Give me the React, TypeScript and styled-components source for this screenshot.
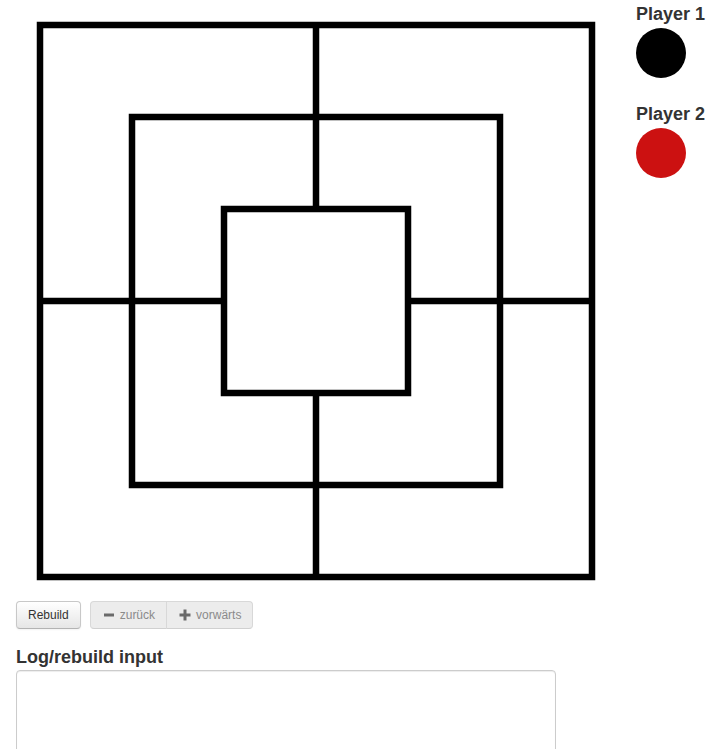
import React from "react";
import styled, { createGlobalStyle } from "styled-components";

const GlobalStyle = createGlobalStyle`
  html, body {
    margin: 0;
    padding: 0;
    background: #fff;
  }
  body {
    font-family: "Liberation Sans", Arial, Helvetica, sans-serif;
    font-size: 14px;
    line-height: 20px;
    color: #333;
  }
`;

const Page = styled.div`
  padding-left: 16px;
`;

const TopRow = styled.div`
  display: flex;
  gap: 20px;
  align-items: flex-start;
`;

const Board = styled.svg`
  display: block;
  flex: none;
`;

const Sidebar = styled.div`
  display: flex;
  flex-direction: column;
  padding-top: 3px;
`;

const PlayerTitle = styled.h4`
  margin: 0;
  font-size: 18px;
  line-height: 22px;
  font-weight: bold;
  color: #333;
`;

const Stone = styled.div<{ $color: string }>`
  width: 50px;
  height: 50px;
  border-radius: 50%;
  background: ${({ $color }) => $color};
  margin: 3px 0 25px;
`;

const Toolbar = styled.div`
  display: flex;
  gap: 9px;
  margin-top: 10px;
`;

const Button = styled.button<{ $disabled?: boolean }>`
  display: inline-flex;
  align-items: center;
  gap: 4px;
  box-sizing: border-box;
  height: 28px;
  padding: 4px 11px;
  font-family: "Liberation Sans", Arial, sans-serif;
  font-size: 12px;
  line-height: 18px;
  color: ${({ $disabled }) => ($disabled ? "#8a8a8a" : "#333")};
  background: ${({ $disabled }) =>
    $disabled ? "#ececec" : "linear-gradient(#ffffff, #e6e6e6)"};
  border: 1px solid ${({ $disabled }) => ($disabled ? "#d8d8d8" : "#c8c8c8")};
  border-bottom-color: ${({ $disabled }) => ($disabled ? "#d0d0d0" : "#b3b3b3")};
  border-radius: 4px;
  box-shadow: ${({ $disabled }) =>
    $disabled ? "none" : "inset 0 1px 0 rgba(255,255,255,.2), 0 1px 2px rgba(0,0,0,.05)"};
  cursor: ${({ $disabled }) => ($disabled ? "default" : "pointer")};
`;

const ButtonGroup = styled.div`
  display: flex;

  ${Button} {
    border-radius: 0;
  }
  ${Button}:first-child {
    border-radius: 4px 0 0 4px;
  }
  ${Button}:last-child {
    border-radius: 0 4px 4px 0;
    margin-left: -1px;
  }
`;

const SectionTitle = styled.h4`
  margin: 18px 0 3px;
  font-size: 18px;
  line-height: 20px;
  font-weight: bold;
  color: #333;
`;

const LogInput = styled.textarea`
  display: block;
  box-sizing: border-box;
  width: 540px;
  height: 140px;
  padding: 4px 6px;
  border: 1px solid #ccc;
  border-radius: 4px;
  box-shadow: inset 0 1px 1px rgba(0, 0, 0, 0.075);
  font-family: "Liberation Sans", Arial, sans-serif;
  font-size: 14px;
  resize: none;
`;

const MinusIcon = () => (
  <svg width="14" height="14" viewBox="0 0 14 14">
    <rect x="2" y="5.5" width="10" height="3" fill="#6a6a6a" />
  </svg>
);

const PlusIcon = () => (
  <svg width="14" height="14" viewBox="0 0 14 14">
    <rect x="1.5" y="5.5" width="11" height="3" fill="#6a6a6a" />
    <rect x="5.5" y="1.5" width="3" height="11" fill="#6a6a6a" />
  </svg>
);

// board grid: 7 x 7 points, 92px apart
const STEP = 92;
const OX = 24;
const OY = 25;
const px = (i: number) => OX + i * STEP;
const py = (j: number) => OY + j * STEP;

const squares = [0, 1, 2];

const MillBoard = () => (
  <Board width={600} height={591} viewBox="0 0 600 591">
    <g fill="none" stroke="#000" strokeWidth={6.5}>
      {squares.map((k) => (
        <rect
          key={k}
          x={px(k)}
          y={py(k)}
          width={(6 - 2 * k) * STEP}
          height={(6 - 2 * k) * STEP}
        />
      ))}
      <line x1={px(3)} y1={py(0)} x2={px(3)} y2={py(2)} />
      <line x1={px(3)} y1={py(4)} x2={px(3)} y2={py(6)} />
      <line x1={px(0)} y1={py(3)} x2={px(2)} y2={py(3)} />
      <line x1={px(4)} y1={py(3)} x2={px(6)} y2={py(3)} />
    </g>
  </Board>
);

const players = [
  { name: "Player 1", color: "#000000" },
  { name: "Player 2", color: "#cc1111" },
];

export default function App() {
  return (
    <>
      <GlobalStyle />
      <Page>
        <TopRow>
          <MillBoard />
          <Sidebar>
            {players.map((p) => (
              <React.Fragment key={p.name}>
                <PlayerTitle>{p.name}</PlayerTitle>
                <Stone $color={p.color} />
              </React.Fragment>
            ))}
          </Sidebar>
        </TopRow>
        <Toolbar>
          <Button>Rebuild</Button>
          <ButtonGroup>
            <Button $disabled>
              <MinusIcon />
              zurück
            </Button>
            <Button $disabled>
              <PlusIcon />
              vorwärts
            </Button>
          </ButtonGroup>
        </Toolbar>
        <SectionTitle>Log/rebuild input</SectionTitle>
        <LogInput />
      </Page>
    </>
  );
}
